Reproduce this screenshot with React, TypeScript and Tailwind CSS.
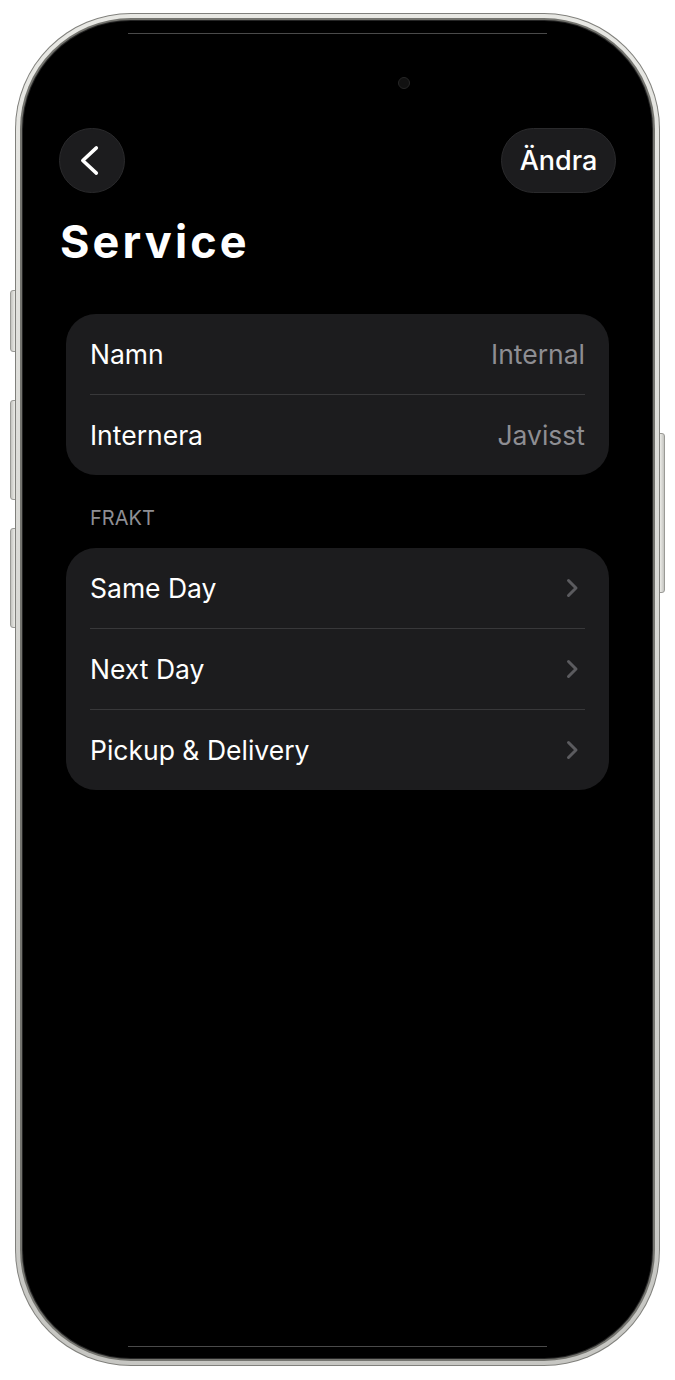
import React from 'react';

const font = { fontFamily: 'Inter, "Noto Sans", "Liberation Sans", sans-serif' };

function Chevron() {
  return (
    <svg width="13" height="20" viewBox="0 0 13 20" fill="none" className="mr-[6px]">
      <path d="M2.5 2.5 L10 10 L2.5 17.5" stroke="#5b5b5f" strokeWidth="3" strokeLinecap="round" strokeLinejoin="round" />
    </svg>
  );
}

function Row({ label, value, chevron }: { label: string; value?: string; chevron?: boolean }) {
  return (
    <div className="h-[80px] flex items-center justify-between px-[24px]">
      <span className="text-[26.5px] leading-none text-white">{label}</span>
      {value && <span className="text-[26.5px] leading-none text-[#8e8e93]">{value}</span>}
      {chevron && <Chevron />}
    </div>
  );
}

function Separator() {
  return <div className="mx-[24px] h-px bg-[#38383a]" />;
}

export default function App() {
  return (
    <div className="relative w-[675px] h-[1380px] bg-white pt-[13px] pl-[15px]" style={font}>
      {/* side buttons */}
      <div className="absolute left-[10px] top-[290px] w-[6px] h-[62px] rounded-l-[3px] border border-[#9a9a96] bg-gradient-to-r from-[#c4c4c0] to-[#ececE8]" />
      <div className="absolute left-[10px] top-[400px] w-[6px] h-[100px] rounded-l-[3px] border border-[#9a9a96] bg-gradient-to-r from-[#c4c4c0] to-[#ececE8]" />
      <div className="absolute left-[10px] top-[528px] w-[6px] h-[100px] rounded-l-[3px] border border-[#9a9a96] bg-gradient-to-r from-[#c4c4c0] to-[#ececE8]" />
      <div className="absolute left-[659px] top-[433px] w-[6px] h-[160px] rounded-r-[3px] border border-[#9a9a96] bg-gradient-to-l from-[#c4c4c0] to-[#ececE8]" />

      {/* phone frame */}
      <div className="relative w-[645px] h-[1353px] rounded-[116px] bg-[#80807c] p-[1px]">
        <div className="h-full rounded-[115px] bg-gradient-to-b from-[#e8e8e4] via-[#d6d6d2] to-[#c6c6c2] p-[4px]">
          <div className="h-full rounded-[111px] bg-[#74746f] p-[2px]">
            <div className="h-full rounded-[109px] bg-[#262626] p-[1px]">
              <div className="relative h-full rounded-[108px] bg-black flex flex-col pt-[107px]">
                {/* screen reflections + camera */}
                <div className="absolute left-[105px] top-[12px] w-[419px] h-px bg-[#4a4a4a]" />
                <div className="absolute left-[105px] bottom-[11px] w-[419px] h-px bg-[#4a4a4a]" />
                <div className="absolute left-[375px] top-[56px] w-[12px] h-[12px] rounded-full bg-[#111] border border-[#262626]" />

                {/* header */}
                <div className="flex items-center justify-between px-[36px]">
                  <button className="w-[66px] h-[65px] rounded-full bg-[#1c1c1e] border border-[#2a2a2c] flex items-center justify-center">
                    <svg width="66" height="65" viewBox="0 0 66 65" fill="none">
                      <path d="M37.5 19.5 L23.5 32.5 L37.5 45.5" stroke="#fff" strokeWidth="3.6" strokeLinecap="round" strokeLinejoin="round" />
                    </svg>
                  </button>
                  <button className="w-[115px] h-[65px] rounded-full bg-[#1c1c1e] border border-[#2a2a2c] flex items-center justify-center text-[27px] leading-none font-medium text-white">
                    Ändra
                  </button>
                </div>

                {/* title */}
                <h1 className="mt-[26px] px-[37px] text-[45px] leading-none font-bold text-white tracking-[0.07em]">Service</h1>

                {/* general card */}
                <div className="mt-[50px] mx-[43px] rounded-[30px] bg-[#1c1c1e]">
                  <Row label="Namn" value="Internal" />
                  <Separator />
                  <Row label="Internera" value="Javisst" />
                </div>

                <div className="mt-[33px] px-[67px] text-[20px] leading-none text-[#8e8e93] uppercase">Frakt</div>

                {/* shipping card */}
                <div className="mt-[20px] mx-[43px] rounded-[30px] bg-[#1c1c1e]">
                  <Row label="Same Day" chevron />
                  <Separator />
                  <Row label="Next Day" chevron />
                  <Separator />
                  <Row label="Pickup & Delivery" chevron />
                </div>
              </div>
            </div>
          </div>
        </div>
      </div>
    </div>
  );
}
